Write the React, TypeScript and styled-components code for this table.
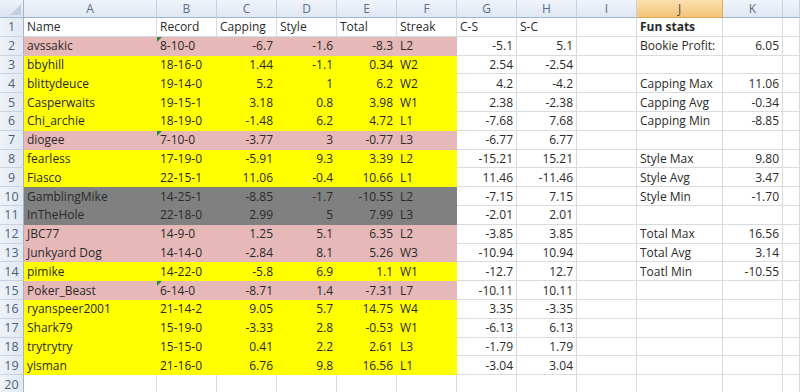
import {createGlobalStyle} from 'styled-components';
import styled from 'styled-components';

type Fill = 'none' | 'pink' | 'yellow' | 'gray';

const fills: Record<Fill, string> = {
  none: '#ffffff',
  pink: '#e6b8b7',
  yellow: '#ffff00',
  gray: '#808080',
};

const COLS = ['A', 'B', 'C', 'D', 'E', 'F', 'G', 'H', 'I', 'J', 'K', ''];

const GlobalStyle = createGlobalStyle`
  html, body {
    margin: 0;
    padding: 0;
    background: #ffffff;
    overflow: hidden;
  }
  body {
    font-family: "Open Sans", "Noto Sans", sans-serif;
  }
`;

const Sheet = styled.div`
  display: grid;
  grid-template-columns: 24px 133px 60px 60px 60px 60px 60px 60px 60px 60px 86px 60px 1fr;
  grid-template-rows: 18px repeat(20, 18.8px);
  width: 800px;
  height: 392px;
  overflow: hidden;
  font-size: 12px;
  color: #2a2a2a;
`;

const Corner = styled.div`
  position: relative;
  box-sizing: border-box;
  background: linear-gradient(#eef2f8, #dde5f0);
  border-right: 1px solid #9eb6ce;
  border-bottom: 1px solid #9eb6ce;
  &::after {
    content: '';
    position: absolute;
    right: 2px;
    bottom: 2px;
    width: 0;
    height: 0;
    border-left: 11px solid transparent;
    border-bottom: 11px solid #c3d0e0;
  }
`;

const ColHead = styled.div<{$active?: boolean}>`
  box-sizing: border-box;
  display: flex;
  align-items: center;
  justify-content: center;
  font-size: 12px;
  color: ${p => (p.$active ? '#4a4a4a' : '#5f6e86')};
  background: ${p =>
    p.$active
      ? 'linear-gradient(#fbe0ae, #f5c47a)'
      : 'linear-gradient(#f0f4fa, #dfe7f2)'};
  border-right: 1px solid ${p => (p.$active ? '#e2a84e' : '#c5d2e2')};
  border-bottom: 1px solid ${p => (p.$active ? '#e2a84e' : '#9eb6ce')};
`;

const RowHead = styled.div`
  box-sizing: border-box;
  display: flex;
  align-items: center;
  justify-content: center;
  font-size: 12.5px;
  color: #4f5f78;
  background: linear-gradient(90deg, #eef2f8, #e2e9f2);
  border-right: 1px solid #9eb6ce;
  border-bottom: 1px solid #c5d2e2;
`;

const Cell = styled.div<{$fill: Fill; $right?: boolean; $bold?: boolean; $flag?: boolean}>`
  position: relative;
  box-sizing: border-box;
  display: flex;
  align-items: center;
  justify-content: ${p => (p.$right ? 'flex-end' : 'flex-start')};
  padding: 0 3px 0 3px;
  white-space: nowrap;
  overflow: visible;
  font-weight: ${p => (p.$bold ? 700 : 400)};
  background: ${p => fills[p.$fill]};
  border-right: 1px solid ${p => (p.$fill === 'none' ? '#d9dcdf' : fills[p.$fill])};
  border-bottom: 1px solid ${p => (p.$fill === 'none' ? '#d9dcdf' : fills[p.$fill])};
  &::before {
    content: '';
    display: ${p => (p.$flag ? 'block' : 'none')};
    position: absolute;
    left: 0;
    top: 0;
    width: 0;
    height: 0;
    border-top: 5px solid #2f8a3a;
    border-right: 5px solid transparent;
  }
`;

type Row = {
  fill: Fill;
  v: string[];
  j?: string;
  k?: string;
  flag?: boolean;
};

const rows: Row[] = [
  {fill: 'pink', v: ['avssakic', '8-10-0', '-6.7', '-1.6', '-8.3', 'L2', '-5.1', '5.1'], j: 'Bookie Profit:', k: '6.05', flag: true},
  {fill: 'yellow', v: ['bbyhill', '18-16-0', '1.44', '-1.1', '0.34', 'W2', '2.54', '-2.54']},
  {fill: 'yellow', v: ['blittydeuce', '19-14-0', '5.2', '1', '6.2', 'W2', '4.2', '-4.2'], j: 'Capping Max', k: '11.06'},
  {fill: 'yellow', v: ['Casperwaits', '19-15-1', '3.18', '0.8', '3.98', 'W1', '2.38', '-2.38'], j: 'Capping Avg', k: '-0.34'},
  {fill: 'yellow', v: ['Chi_archie', '18-19-0', '-1.48', '6.2', '4.72', 'L1', '-7.68', '7.68'], j: 'Capping Min', k: '-8.85'},
  {fill: 'pink', v: ['diogee', '7-10-0', '-3.77', '3', '-0.77', 'L3', '-6.77', '6.77'], flag: true},
  {fill: 'yellow', v: ['fearless', '17-19-0', '-5.91', '9.3', '3.39', 'L2', '-15.21', '15.21'], j: 'Style Max', k: '9.80'},
  {fill: 'yellow', v: ['Fiasco', '22-15-1', '11.06', '-0.4', '10.66', 'L1', '11.46', '-11.46'], j: 'Style Avg', k: '3.47'},
  {fill: 'gray', v: ['GamblingMike', '14-25-1', '-8.85', '-1.7', '-10.55', 'L2', '-7.15', '7.15'], j: 'Style Min', k: '-1.70'},
  {fill: 'gray', v: ['InTheHole', '22-18-0', '2.99', '5', '7.99', 'L3', '-2.01', '2.01']},
  {fill: 'pink', v: ['JBC77', '14-9-0', '1.25', '5.1', '6.35', 'L2', '-3.85', '3.85'], j: 'Total Max', k: '16.56'},
  {fill: 'pink', v: ['Junkyard Dog', '14-14-0', '-2.84', '8.1', '5.26', 'W3', '-10.94', '10.94'], j: 'Total Avg', k: '3.14'},
  {fill: 'yellow', v: ['pimike', '14-22-0', '-5.8', '6.9', '1.1', 'W1', '-12.7', '12.7'], j: 'Toatl Min', k: '-10.55'},
  {fill: 'pink', v: ['Poker_Beast', '6-14-0', '-8.71', '1.4', '-7.31', 'L7', '-10.11', '10.11'], flag: true},
  {fill: 'yellow', v: ['ryanspeer2001', '21-14-2', '9.05', '5.7', '14.75', 'W4', '3.35', '-3.35']},
  {fill: 'yellow', v: ['Shark79', '15-19-0', '-3.33', '2.8', '-0.53', 'W1', '-6.13', '6.13']},
  {fill: 'yellow', v: ['trytrytry', '15-15-0', '0.41', '2.2', '2.61', 'L3', '-1.79', '1.79']},
  {fill: 'yellow', v: ['yisman', '21-16-0', '6.76', '9.8', '16.56', 'L1', '-3.04', '3.04']},
];

// columns A..F get the row fill, G onward stay white
const filledCols = 6;
const textCols = [0, 1, 5];

export default function App() {
  const header = ['Name', 'Record', 'Capping', 'Style', 'Total', 'Streak', 'C-S', 'S-C'];

  return (
    <>
      <GlobalStyle />
      <Sheet>
        <Corner />
        {COLS.map((c, i) => (
          <ColHead key={i} $active={c === 'J'}>
            {c}
          </ColHead>
        ))}

        <RowHead>1</RowHead>
        {header.map((h, i) => (
          <Cell key={i} $fill="none">
            {h}
          </Cell>
        ))}
        <Cell $fill="none" />
        <Cell $fill="none" $bold>
          Fun stats
        </Cell>
        <Cell $fill="none" />
        <Cell $fill="none" />

        {rows.map((r, ri) => (
          <Row key={ri} row={r} n={ri + 2} />
        ))}

        <RowHead>20</RowHead>
        {COLS.map((_, i) => (
          <Cell key={i} $fill="none" />
        ))}
      </Sheet>
    </>
  );
}

function Row({row, n}: {row: Row; n: number}) {
  return (
    <>
      <RowHead>{n}</RowHead>
      {row.v.map((val, i) => (
        <Cell
          key={i}
          $fill={i < filledCols ? row.fill : 'none'}
          $right={!textCols.includes(i)}
          $flag={i === 1 && row.flag}
        >
          {val}
        </Cell>
      ))}
      <Cell $fill="none" />
      <Cell $fill="none">{row.j}</Cell>
      <Cell $fill="none" $right>
        {row.k}
      </Cell>
      <Cell $fill="none" />
    </>
  );
}
